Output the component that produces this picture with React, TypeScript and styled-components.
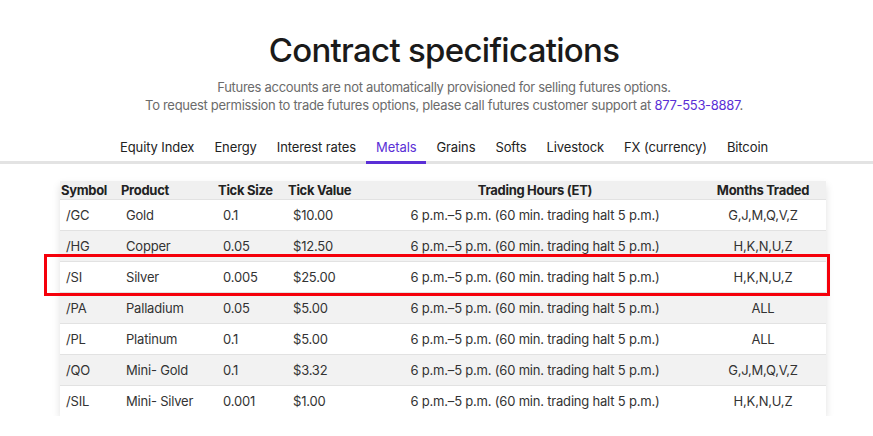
import React from "react";
import styled, { createGlobalStyle } from "styled-components";

const Global = createGlobalStyle`
  html, body { margin: 0; padding: 0; background: #fff; }
  body { font-family: Inter, "Open Sans", Arial, sans-serif; color: #222; }
`;

const Page = styled.div`
  width: 873px;
  padding-top: 28px;
`;

const Centered = styled.div`
  padding-left: 15px;
  display: flex;
  flex-direction: column;
  align-items: center;
`;

const Title = styled.h1`
  margin: 0;
  font-size: 33px;
  line-height: 44px;
  font-weight: 500;
  color: #1a1a1a;
  letter-spacing: -0.7px;
`;

const Sub = styled.p`
  margin: 6px 0 0;
  font-size: 13px;
  line-height: 18px;
  color: #6b6b6b;
  text-align: center;
  letter-spacing: -0.3px;
`;

const Link = styled.a`
  color: #5a2fd6;
  text-decoration: none;
`;

const TabBar = styled.div`
  margin-top: 24px;
  border-bottom: 3px solid #e3e3e3;
  padding-left: 15px;
  display: flex;
  justify-content: center;
`;

const Tab = styled.div<{ $active?: boolean }>`
  padding: 0 10px 5px;
  margin-bottom: -3px;
  font-size: 13px;
  line-height: 18px;
  letter-spacing: -0.1px;
  color: ${(p) => (p.$active ? "#5a2fd6" : "#222")};
  border-bottom: 3px solid ${(p) => (p.$active ? "#5a2fd6" : "transparent")};
`;

const TableWrap = styled.div`
  margin: 17px 0 0 60px;
  width: 766px;
  box-shadow: 0 4px 8px rgba(0, 0, 0, 0.12);
`;

const cols = "60px 97px 70px 83px 330px 126px";

const HeadRow = styled.div`
  display: grid;
  grid-template-columns: ${cols};
  height: 18px;
  background: #f0f0f0;
  border-bottom: 1px solid #e2e2e2;
  align-items: center;
`;

const HeadCell = styled.div<{ $center?: boolean }>`
  font-size: 13px;
  font-weight: 700;
  color: #222;
  padding-left: ${(p) => (p.$center ? "0" : "1px")};
  text-align: ${(p) => (p.$center ? "center" : "left")};
  white-space: nowrap;
  letter-spacing: -0.3px;
`;

const Row = styled.div<{ $alt?: boolean }>`
  position: relative;
  display: grid;
  grid-template-columns: ${cols};
  height: 30px;
  align-items: center;
  background: ${(p) => (p.$alt ? "#f2f2f2" : "#fff")};
  border-bottom: 1px solid #e2e2e2;
  &:last-child { border-bottom: none; }
`;

const Cell = styled.div<{ $center?: boolean }>`
  font-size: 13px;
  letter-spacing: -0.2px;
  color: #333;
  padding-left: ${(p) => (p.$center ? "0" : "6px")};
  text-align: ${(p) => (p.$center ? "center" : "left")};
  white-space: nowrap;
`;

const Highlight = styled.div`
  position: absolute;
  z-index: 2;
  left: -16px;
  right: -4px;
  top: -8px;
  bottom: -4px;
  border: 3px solid #f5000a;
  pointer-events: none;
`;

const tabs = [
  "Equity Index",
  "Energy",
  "Interest rates",
  "Metals",
  "Grains",
  "Softs",
  "Livestock",
  "FX (currency)",
  "Bitcoin",
];

const hours = "6 p.m.–5 p.m. (60 min. trading halt 5 p.m.)";

const rows = [
  ["/GC", "Gold", "0.1", "$10.00", "G,J,M,Q,V,Z"],
  ["/HG", "Copper", "0.05", "$12.50", "H,K,N,U,Z"],
  ["/SI", "Silver", "0.005", "$25.00", "H,K,N,U,Z"],
  ["/PA", "Palladium", "0.05", "$5.00", "ALL"],
  ["/PL", "Platinum", "0.1", "$5.00", "ALL"],
  ["/QO", "Mini- Gold", "0.1", "$3.32", "G,J,M,Q,V,Z"],
  ["/SIL", "Mini- Silver", "0.001", "$1.00", "H,K,N,U,Z"],
];

export default function App() {
  return (
    <Page>
      <Global />
      <Centered>
        <Title>Contract specifications</Title>
        <Sub>
          Futures accounts are not automatically provisioned for selling futures options.
          <br />
          To request permission to trade futures options, please call futures customer support at{" "}
          <Link href="#">877-553-8887</Link>.
        </Sub>
      </Centered>
      <TabBar>
        {tabs.map((t) => (
          <Tab key={t} $active={t === "Metals"}>
            {t}
          </Tab>
        ))}
      </TabBar>
      <TableWrap>
        <HeadRow>
          <HeadCell>Symbol</HeadCell>
          <HeadCell>Product</HeadCell>
          <HeadCell>Tick Size</HeadCell>
          <HeadCell>Tick Value</HeadCell>
          <HeadCell $center>Trading Hours (ET)</HeadCell>
          <HeadCell $center>Months Traded</HeadCell>
        </HeadRow>
        {rows.map((r, i) => (
          <Row key={r[0]} $alt={i % 2 === 1}>
            <Cell>{r[0]}</Cell>
            <Cell>{r[1]}</Cell>
            <Cell>{r[2]}</Cell>
            <Cell>{r[3]}</Cell>
            <Cell $center>{hours}</Cell>
            <Cell $center>{r[4]}</Cell>
            {r[0] === "/SI" && <Highlight />}
          </Row>
        ))}
      </TableWrap>
    </Page>
  );
}
